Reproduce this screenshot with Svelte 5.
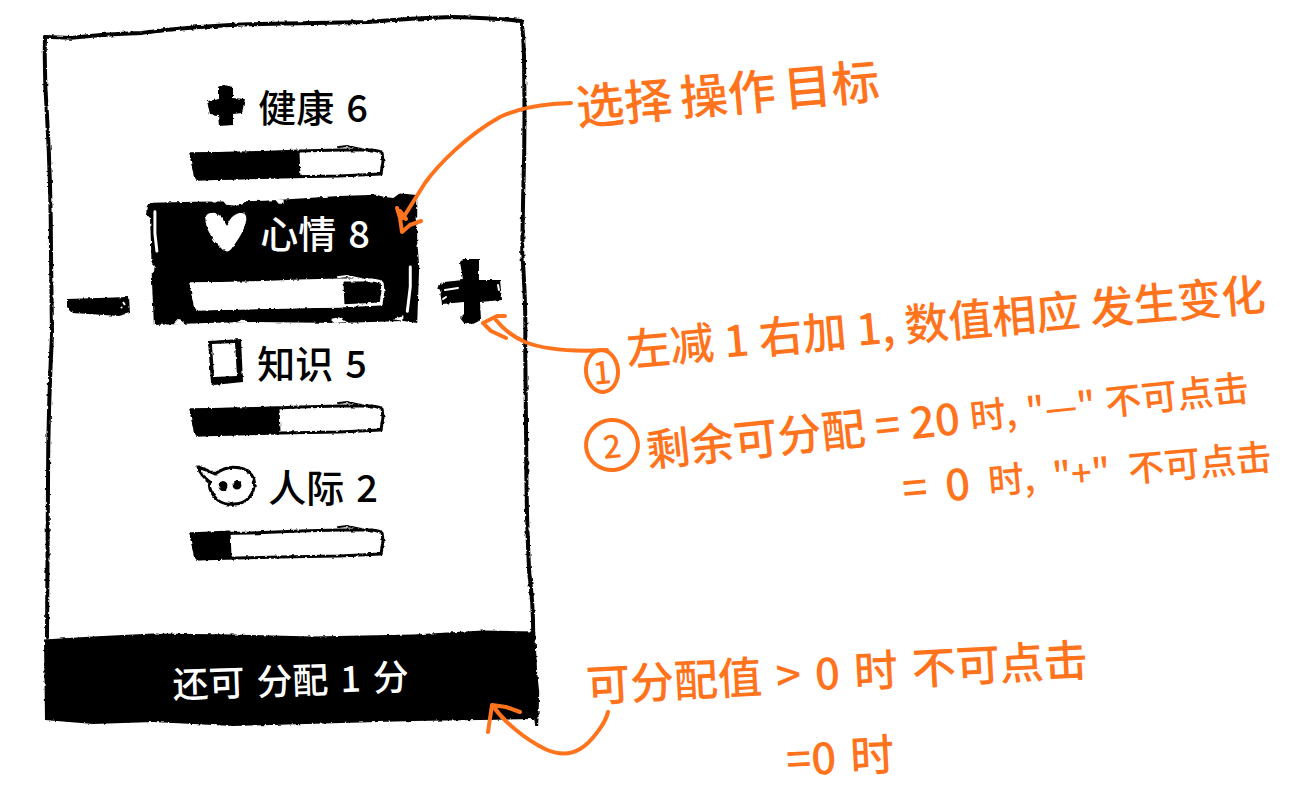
<script>
  let stats = $state([
    { id: 'health', name: '健康', value: 6, fill: 109 },
    { id: 'mood', name: '心情', value: 8, fill: 153 },
    { id: 'knowledge', name: '知识', value: 5, fill: 89 },
    { id: 'social', name: '人际', value: 2, fill: 40 }
  ]);
  let selected = $state(1);
  let left = $state(1);

  function change(step) {
    const stat = stats[selected];
    if (left - step < 0 || left - step > 20 || stat.value + step < 0 || stat.value + step > 10) return;
    stat.value += step;
    stat.fill = Math.min(190, Math.max(0, stat.fill + step * 19));
    left -= step;
  }
</script>

{#snippet icon(id)}
  {#if id === 'health'}
    <svg class="icon" width="40" height="42" viewBox="0 0 40 42" aria-hidden="true">
      <g class="rough" fill="currentColor">
        <path d="M13 2 L17 0 L27 2 L27 13 L39 14 L36 28 L27 29 L27 40 L13 41 L12 30 L4 29 L1 16 L13 14 Z" />
      </g>
    </svg>
  {:else if id === 'mood'}
    <svg class="icon" width="44" height="42" viewBox="0 0 44 42" aria-hidden="true">
      <path class="rough" fill="currentColor" d="M2 5 C5 0 14 1 18 7 L23 15 C25 8 31 1 38 2 C44 3 43 10 40 17 C37 25 31 33 28 37 C25 42 20 41 17 37 C9 30 -1 14 2 5 Z" />
    </svg>
  {:else if id === 'knowledge'}
    <svg class="icon" width="38" height="46" viewBox="0 0 38 46" aria-hidden="true">
      <path class="rough" fill="currentColor" fill-rule="evenodd" d="M1 2 L34 0 L36 43 L7 46 L4 44 Z M5 5 L7 38 L30 37 L28 4 Z" />
    </svg>
  {:else}
    <svg class="icon" width="60" height="42" viewBox="0 0 60 42" aria-hidden="true">
      <g class="rough" fill="none" stroke="currentColor" stroke-width="3" stroke-linejoin="round" stroke-linecap="round">
        <path d="M2 2 Q11 5 19 9 C27 3 36 1 44 3 C54 5 60 13 58 22 C56 33 48 39 38 39 C30 40 23 38 18 31 C15 27 12 22 14 17 Q5 11 2 2 Z" />
        <ellipse cx="27" cy="21" rx="3" ry="3.5" fill="currentColor" />
        <ellipse cx="41" cy="20" rx="3" ry="3" fill="currentColor" />
      </g>
    </svg>
  {/if}
{/snippet}

<svg class="defs" width="0" height="0" aria-hidden="true">
  <filter id="rough" x="-5%" y="-10%" width="110%" height="120%">
    <feTurbulence type="fractalNoise" baseFrequency="0.25" numOctaves="2" seed="4" />
    <feDisplacementMap in="SourceGraphic" scale="3" xChannelSelector="R" yChannelSelector="G" />
  </filter>
</svg>

<main>
  <section class="phone" aria-label="分配">
    <svg class="frame" viewBox="0 0 495 712" preserveAspectRatio="none" aria-hidden="true">
      <g class="line" fill="none" stroke="#000" stroke-width="4" stroke-linecap="round" stroke-linejoin="round">
        <path d="M2 21 L28 22 Q60 18 99 17 Q150 10 217 8 L325 6 Q370 2 410 1 Q450 2 478 5 Q481 20 481 60 Q482 120 480 180 L479 238 Q483 290 482 330 L483 430 Q483 500 486 560 Q490 590 490 620" />
        <path d="M2 21 Q1 60 4 100 Q8 170 8 240 L9 320 Q5 400 5 470 L4 625" />
      </g>
      <path class="rough" d="M1 627 L50 624 L110 621 L190 622 L270 624 L370 622 L440 618 L492 619 L494 660 L496 680 L495 714 L492 714 L491 707 L370 709 L190 714 L110 710 L50 712 L2 708 Z" />
    </svg>

    <div class="board">
      <button class="step minus" aria-label="减1" onclick={() => change(-1)}>
        <svg width="64" height="20" viewBox="0 0 64 20" aria-hidden="true">
          <path class="rough" d="M1 3 L63 1 L64 17 L53 20 L7 17 L1 11 Z" />
          <path d="M57 6 L59 9 M55 11 L56 12" stroke="#fff" stroke-width="2" />
        </svg>
      </button>

      {#each stats as stat, i (stat.id)}
        <button class="stat" class:selected={selected === i} aria-pressed={selected === i} onclick={() => (selected = i)}>
          {#if selected === i}
            <svg class="ink" viewBox="0 0 277 136" preserveAspectRatio="none" aria-hidden="true">
              <path class="rough" d="M1 14 L5 11 L50 10 L120 9 L195 4 L225 3 L250 1 L274 3 L274 50 L276 75 L274 133 L260 131 L195 133 L110 132 L60 133 L8 135 L6 90 L5 50 L4 26 L0 24 Z" />
              <g class="rough" fill="#fff">
                <path d="M77 8 L99 8 L98 12 L92 14 L81 13 Z M130 7 L139 8 L139 12 L134 12 Z M230 2 L258 0 L250 6 L241 5 Z" />
                <path d="M272 25 L278 24 L278 31 L273 30 Z M4 70 L9 75 L8 81 L4 83 Z M28 134 L33 129 L40 134 Z M92 132 L98 129 L104 133 Z M186 129 L195 127 L203 132 L190 133 Z M249 129 L260 126 L260 131 Z" />
              </g>
              <path d="M9 20 L9 42 L11 60 M267 76 L267 96 L264 121" fill="none" stroke="#fff" stroke-width="3" stroke-linecap="round" />
            </svg>
          {/if}
          <span class="title">
            {@render icon(stat.id)}
            <span>{stat.name}</span>
            <span class="value">{stat.value}</span>
          </span>
          <svg class="bar" width="196" height="34" viewBox="0 0 196 34" aria-hidden="true">
            <g class="rough" stroke="currentColor" stroke-width="3" stroke-linejoin="round" stroke-linecap="round">
              <path fill="none" d="M2 8 L60 7 L110 5 L150 4 L184 4 L193 6 L194 15 L192 28 L150 30 L90 31 L7 33 Z" />
              <path fill="currentColor" d="M2 8 L{stat.fill * 0.5} 7 L{stat.fill} 6 L{stat.fill + 1} 30 L7 33 Z" />
              <path fill="none" stroke-width="2" d="M150 1 L158 0 L172 3" />
            </g>
          </svg>
        </button>
      {/each}

      <button class="step plus" aria-label="加1" onclick={() => change(1)}>
        <svg width="66" height="66" viewBox="0 0 66 66" aria-hidden="true">
          <path class="rough" d="M24 4 L27 1 L43 1 L43 22 L64 22 L66 42 L44 44 L45 62 L37 66 L28 65 L24 60 L28 56 L28 44 L6 46 L4 32 L1 29 L8 24 L27 22 Z" />
          <path d="M7 41 L10 39 M62 27 L63 32 M9 32 L22 30" fill="none" stroke="#fff" stroke-width="2" stroke-linecap="round" />
        </svg>
      </button>
    </div>

    <button class="confirm" disabled={left > 0}>
      <span>还可</span><span>分配</span><span>{left}</span><span>分</span>
    </button>
  </section>

  <section class="notes" aria-label="说明">
    <p class="note target"><span>选择</span><span>操作</span><span>目标</span></p>

    <ol>
      <li class="first">
        <span class="badge">1</span>
        <p class="note">
          <span>左减</span><span>1</span><span>右加</span><span>1,</span><span>数值相应</span><span>发生变化</span>
        </p>
      </li>
      <li>
        <span class="badge round">2</span>
        <div class="cases">
          <p class="note case">
            <span>剩余可分配</span><span>=</span><span>20</span><span class="small">时,</span><span class="small">"—"</span><span class="small">不可点击</span>
          </p>
          <p class="note case zero">
            <span>=</span><span>0</span><span class="small">时,</span><span class="small">"+"</span><span class="small">不可点击</span>
          </p>
        </div>
      </li>
    </ol>

    <div class="submit">
      <p class="note"><span>可分配值</span><span>&gt;</span><span>0</span><span>时</span><span>不可点击</span></p>
      <p class="note done"><span>=0</span><span>时</span></p>
    </div>
  </section>

  <svg class="arrows" viewBox="0 0 1301 797" preserveAspectRatio="none" aria-hidden="true">
    <path d="M571 103 L553 104 C530 106 515 110 500 117 C466 136 438 165 425 183 L403 218 M397 208 L400 218 L402 232 L410 225 L421 221 M400 211 L406 219" />
    <path d="M607 350 C570 352 545 350 525 342 Q507 334 496 320 M505 316 L497 316 L483 323 L491 331 L506 338" />
    <path d="M608 712 C606 722 592 742 580 749 Q565 758 545 749 C525 739 504 722 493 706 M488 732 L492 705 L506 707 L520 712" />
  </svg>
</main>

<style>
  :global(body) {
    margin: 0;
    background: #fff;
  }

  main {
    position: relative;
    box-sizing: border-box;
    display: grid;
    grid-template-columns: 40% 1fr;
    column-gap: 38px;
    align-items: start;
    min-height: 100vh;
    padding: 16px 20px 0 43px;
    overflow: hidden;
    font-family: "Noto Sans CJK SC", sans-serif;
    font-weight: 500;
    color: #000;
  }

  .defs,
  .frame,
  .ink,
  .arrows {
    position: absolute;
  }

  .rough,
  .line {
    filter: url(#rough);
  }

  button {
    margin: 0;
    padding: 0;
    border: 0;
    background: none;
    font: inherit;
    color: inherit;
    cursor: pointer;
  }

  .phone {
    position: relative;
    display: flex;
    flex-direction: column;
    padding-top: 54px;
  }

  .frame {
    inset: 0;
    width: 100%;
    height: 100%;
    overflow: visible;
  }

  .board {
    position: relative;
    display: grid;
    grid-template-columns: 64px 1fr 66px;
    column-gap: 18px;
    row-gap: 2px;
    padding: 0 36px 60px 23px;
  }

  .stat {
    position: relative;
    grid-column: 2;
    display: flex;
    flex-direction: column;
    align-items: center;
    gap: 16px;
    padding: 12px 0 12px 8px;
  }

  .stat.selected {
    gap: 20px;
    padding: 14px 0 14px 8px;
    color: #fff;
  }

  .ink {
    inset: -2px;
    width: calc(100% + 4px);
    height: calc(100% + 4px);
    fill: #000;
    overflow: visible;
  }

  .title {
    position: relative;
    display: flex;
    align-items: center;
    gap: 12px;
    height: 48px;
    font-size: 38px;
    line-height: 48px;
  }

  .icon,
  .bar {
    position: relative;
    display: block;
    overflow: visible;
  }

  .step {
    align-self: end;
    grid-row: 2;
  }

  .step svg {
    display: block;
    overflow: visible;
  }

  .minus {
    grid-column: 1;
    padding-bottom: 8px;
  }

  .plus {
    grid-column: 3;
  }

  .confirm {
    position: relative;
    display: flex;
    justify-content: center;
    align-items: center;
    gap: 12px;
    height: 92px;
    font-size: 36px;
    line-height: 48px;
    color: #fff;
    rotate: -2deg;
  }

  .notes {
    padding-top: 58px;
    color: #ff731c;
  }

  p,
  ol {
    margin: 0;
    padding: 0;
  }

  ol {
    display: flex;
    flex-direction: column;
    gap: 24px;
    padding-left: 8px;
    margin-top: 183px;
    list-style: none;
  }

  li {
    display: flex;
    align-items: flex-start;
    gap: 6px;
  }

  .first {
    height: 77px;
  }

  .first .badge {
    align-self: flex-end;
  }

  .badge {
    box-sizing: border-box;
    flex: none;
    width: 36px;
    height: 46px;
    border: 4px solid;
    border-radius: 50%;
    font-size: 32px;
    line-height: 36px;
    text-align: center;
    rotate: -5deg;
  }

  .badge.round {
    width: 56px;
    height: 54px;
    line-height: 44px;
  }

  .note {
    display: flex;
    align-items: center;
    gap: 10px;
    font-size: 44px;
    line-height: 60px;
    white-space: nowrap;
    transform-origin: left center;
    rotate: -5deg;
  }

  .target {
    gap: 8px;
    font-size: 48px;
  }

  .cases {
    padding-top: 11px;
  }

  .case {
    line-height: 38px;
    rotate: -6deg;
  }

  .zero {
    gap: 18px;
    padding-left: 256px;
    transform-origin: 256px center;
    rotate: -5deg;
  }

  .small {
    font-size: 36px;
  }

  .submit {
    display: grid;
    gap: 14px;
    margin-top: 148px;
    padding-left: 10px;
  }

  .submit .note {
    gap: 14px;
    rotate: -3deg;
  }

  .submit .done {
    padding-left: 200px;
    transform-origin: 200px center;
  }

  .arrows {
    inset: 0;
    width: 100%;
    height: 100%;
    fill: none;
    stroke: #ff731c;
    stroke-width: 4;
    stroke-linecap: round;
    stroke-linejoin: round;
    pointer-events: none;
  }
</style>
